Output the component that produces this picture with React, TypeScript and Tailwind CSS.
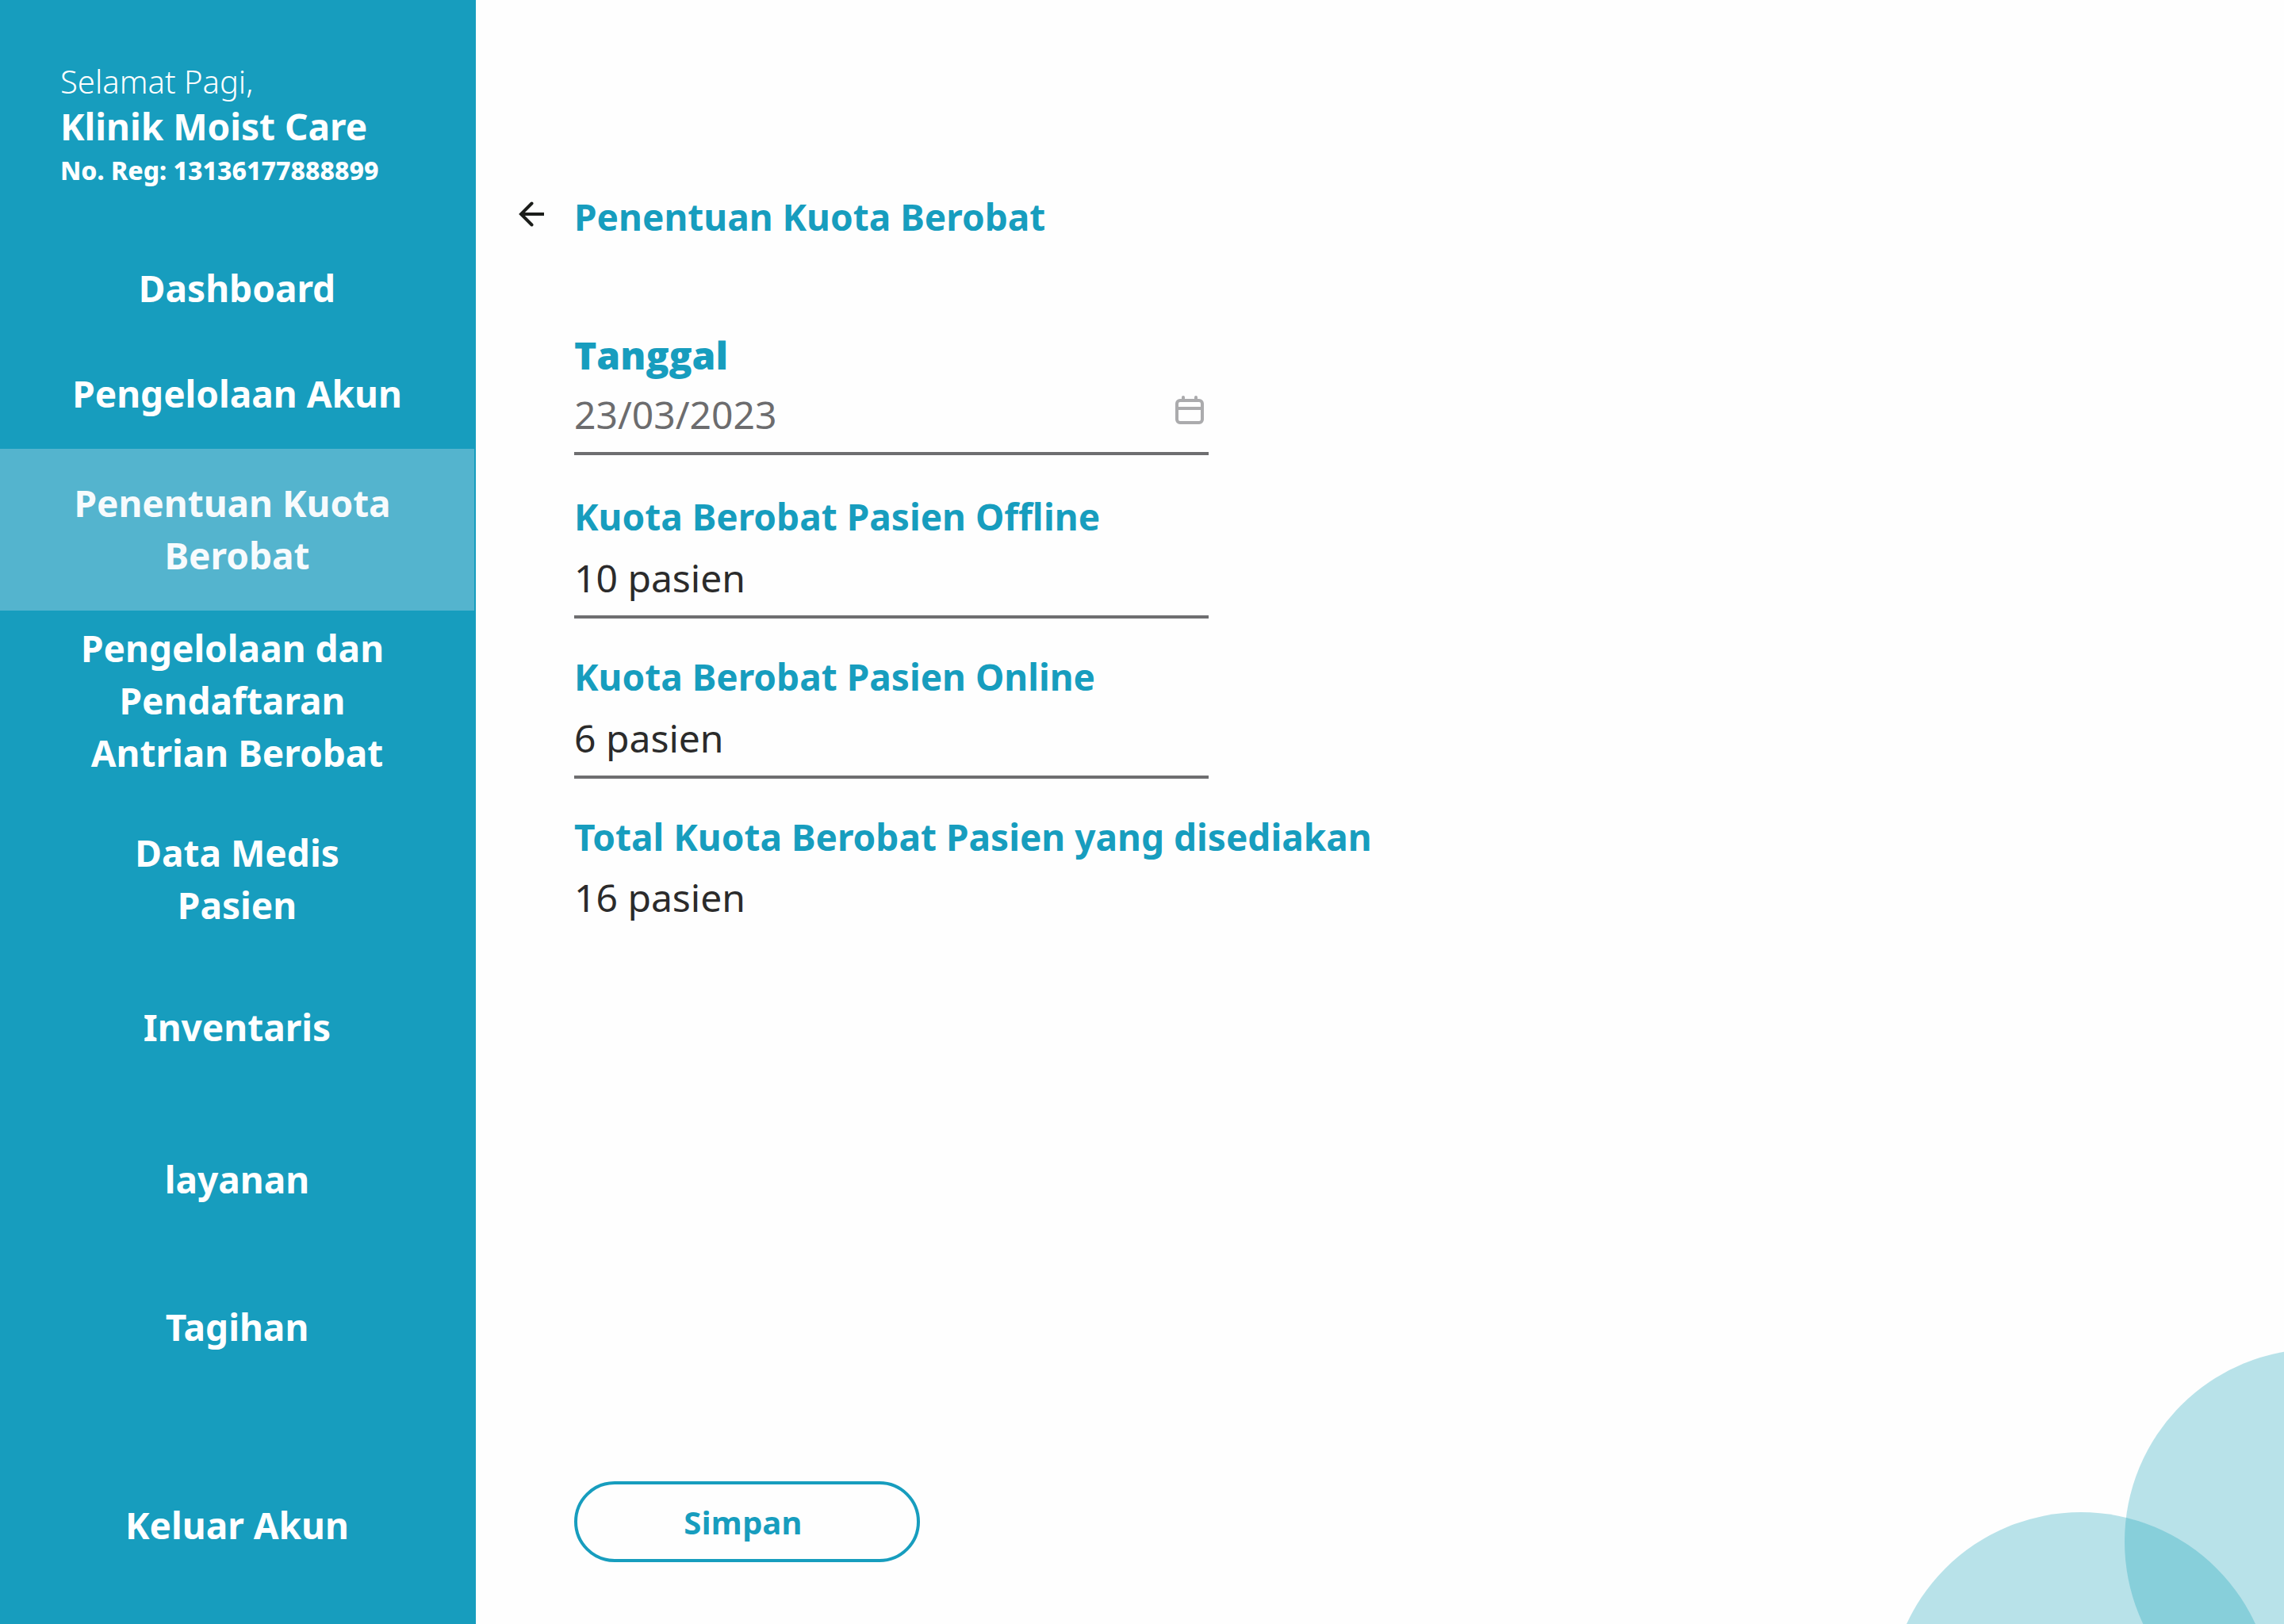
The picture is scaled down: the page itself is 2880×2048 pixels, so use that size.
import { useState } from "react";
import clsx from "clsx";

type NavItem = { label: string; spacing: string; active?: boolean };

const navItems: NavItem[] = [
  { label: "Dashboard", spacing: "mt-[87px]" },
  { label: "Pengelolaan Akun", spacing: "mt-[67px]" },
  { label: "Penentuan Kuota \nBerobat", spacing: "mt-[37px]", active: true },
  { label: "Pengelolaan dan \nPendaftaran \nAntrian Berobat", spacing: "mt-[14px]" },
  { label: "Data Medis\nPasien", spacing: "mt-[60px]" },
  { label: "Inventaris", spacing: "mt-[88px]" },
  { label: "layanan", spacing: "mt-[126px]" },
  { label: "Tagihan", spacing: "mt-[120px]" },
  { label: "Keluar Akun", spacing: "mt-[184px]" },
];

function Sidebar() {
  return (
    <aside className="flex w-[600px] shrink-0 flex-col bg-[#179dbe] pt-[75px] text-white">
      <header className="px-[76px] leading-[56px]">
        <p className="text-[40px] font-light">Selamat Pagi,</p>
        <p className="text-[46px] font-bold whitespace-nowrap">Klinik Moist Care</p>
        <p className="text-[32px] font-extrabold whitespace-nowrap">No. Reg: 13136177888899</p>
      </header>
      <nav aria-label="Menu utama">
        <ul className="flex flex-col">
          {navItems.map((item) => (
            <li key={item.label} className={item.spacing}>
              <a
                href="#"
                aria-current={item.active ? "page" : undefined}
                className={clsx(
                  "mr-0.5 block text-center text-[46px] leading-[66px] font-bold whitespace-pre",
                  item.active && "bg-[#54b4ce] pt-[35px] pb-[37px] text-[#f7fbfd]",
                )}
              >
                {item.label}
              </a>
            </li>
          ))}
        </ul>
      </nav>
    </aside>
  );
}

function ArrowLeftIcon() {
  return (
    <svg viewBox="0 0 40 40" className="size-10" fill="none" stroke="currentColor" strokeWidth="4" aria-hidden="true">
      <path d="M36 17H7" />
      <path d="M20.5 3.5 7 17l13.5 13.5" strokeLinecap="round" />
    </svg>
  );
}

function CalendarIcon() {
  return (
    <svg viewBox="0 0 36 36" className="size-9" fill="none" stroke="currentColor" strokeWidth="4" aria-hidden="true">
      <rect x="2" y="6" width="32" height="28" rx="4" />
      <path d="M2 16h32" />
      <path d="M10 2v4M26 2v4" strokeLinecap="round" />
    </svg>
  );
}

function Circles() {
  return (
    <svg
      viewBox="0 0 498 347"
      className="pointer-events-none absolute right-0 bottom-0 h-[347px] w-[498px]"
      fill="#18a2bb"
      fillOpacity="0.3"
      aria-hidden="true"
    >
      <circle cx="540" cy="243" r="243" />
      <circle cx="242" cy="448" r="242" />
    </svg>
  );
}

type QuotaFieldProps = { id: string; label: string; value: string; onChange: (value: string) => void };

function QuotaField({ id, label, value, onChange }: QuotaFieldProps) {
  return (
    <div className="flex flex-col">
      <label htmlFor={id} className="text-[46px] leading-[66px] font-bold text-[#179dbe]">
        {label}
      </label>
      <input
        id={id}
        type="text"
        value={value}
        onChange={(e) => onChange(e.target.value)}
        className="h-24 w-full border-b-4 border-[#6e6e70] bg-transparent pb-[3px] text-[48px] text-[#2b2b2b] outline-none"
      />
    </div>
  );
}

export default function App() {
  const [date, setDate] = useState("23/03/2023");
  const [offline, setOffline] = useState("10 pasien");
  const [online, setOnline] = useState("6 pasien");
  const total = (parseInt(offline, 10) || 0) + (parseInt(online, 10) || 0);

  return (
    <div className="relative flex min-h-screen overflow-hidden bg-[#fefefe] font-['Noto_Sans',sans-serif]">
      <Sidebar />
      <main className="relative flex flex-1 flex-col pt-60 pr-10 pb-[78px]">
        <Circles />
        <div className="flex items-center gap-[34px] pl-[50px]">
          <button type="button" aria-label="Kembali" className="text-[#1b1d1a]">
            <ArrowLeftIcon />
          </button>
          <h1 className="text-[46px] leading-[66px] font-bold text-[#179dbe]">Penentuan Kuota Berobat</h1>
        </div>

        <form
          className="flex flex-1 flex-col items-start pt-[109px] pl-[124px]"
          onSubmit={(e) => e.preventDefault()}
        >
          <div className="flex w-full max-w-[800px] flex-col gap-10">
            <div className="mb-1 flex flex-col">
              <label
                htmlFor="tanggal"
                className="font-['Open_Sans',sans-serif] text-[48px] leading-[66px] font-extrabold text-[#179dbe]"
              >
                Tanggal
              </label>
              <div className="flex h-[93px] items-center border-b-4 border-[#6e6e70] pr-1.5 pb-1.5">
                <input
                  id="tanggal"
                  type="text"
                  value={date}
                  onChange={(e) => setDate(e.target.value)}
                  className="min-w-0 flex-1 bg-transparent text-[48px] leading-[66px] text-[#6c6c6e] outline-none"
                />
                <button type="button" aria-label="Pilih tanggal" className="pb-3 text-[#ababad]">
                  <CalendarIcon />
                </button>
              </div>
            </div>
            <QuotaField id="offline" label="Kuota Berobat Pasien Offline" value={offline} onChange={setOffline} />
            <QuotaField id="online" label="Kuota Berobat Pasien Online" value={online} onChange={setOnline} />
            <div className="flex flex-col">
              <label htmlFor="total" className="text-[46px] leading-[66px] font-bold whitespace-nowrap text-[#179dbe]">
                Total Kuota Berobat Pasien yang disediakan
              </label>
              <output id="total" className="text-[48px] leading-[88px] text-[#2b2b2b]">
                {total} pasien
              </output>
            </div>
          </div>

          <button
            type="submit"
            className="mt-auto h-[102px] w-[436px] rounded-full border-4 border-[#179dbe] pt-0.5 pr-2.5 font-['Open_Sans',sans-serif] text-[40px] leading-[66px] font-bold text-[#179dbe]"
          >
            Simpan
          </button>
        </form>
      </main>
    </div>
  );
}
